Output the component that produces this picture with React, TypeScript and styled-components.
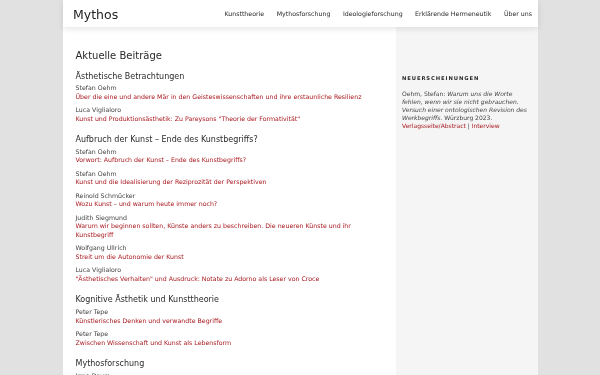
import React from "react";
import styled, { createGlobalStyle } from "styled-components";

const Global = createGlobalStyle`
  html, body { margin: 0; padding: 0; background: #e1e1e1; }
  body { font-family: "DejaVu Sans", Verdana, sans-serif; color: #333; -webkit-font-smoothing: antialiased; }
  * { box-sizing: border-box; }
`;

const Page = styled.div`
  width: 475px;
  margin: 0 auto;
  min-height: 375px;
  background: #fff;
  display: flex;
  flex-direction: column;
  will-change: transform;
`;

const Header = styled.header`
  position: relative;
  z-index: 2;
  height: 27px;
  display: flex;
  align-items: center;
  justify-content: space-between;
  padding: 0 6px 0 10px;
  background: #fff;
  box-shadow: 0 2px 6px rgba(0, 0, 0, 0.1);
`;

const Logo = styled.div`
  font-size: 12.5px;
  line-height: 14px;
  padding-top: 2px;
  color: #1e1e1e;
`;

const Nav = styled.nav`
  display: flex;
  align-items: center;
`;

const NavItem = styled.a`
  font-size: 6.25px;
  line-height: 8px;
  padding: 0 6.25px;
  color: #2a2a2a;
  text-decoration: none;
  &:last-child { padding-right: 0; }
`;

const Body = styled.div`
  display: grid;
  grid-template-columns: 333px 142px;
  flex: 1;
`;

const Main = styled.main`
  padding: 22.5px 12.5px 20px 12.5px;
`;

const Title = styled.h1`
  margin: 0 0 10px;
  font-size: 10px;
  line-height: 12px;
  font-weight: normal;
  color: #2a2a2a;
`;

const Section = styled.section`
  margin-bottom: 11.5px;
`;

const SectionTitle = styled.h2`
  margin: 0 0 3px;
  font-size: 8px;
  line-height: 9.6px;
  font-weight: normal;
  color: #2a2a2a;
`;

const Entries = styled.div`
  display: flex;
  flex-direction: column;
  gap: 4.5px;
`;

const Entry = styled.div`
  font-size: 6.25px;
  line-height: 8.75px;
`;

const Author = styled.div`
  color: #444;
`;

const Link = styled.a`
  display: block;
  color: #a8181e;
  text-decoration: none;
`;

const Sidebar = styled.aside`
  background: #f5f5f5;
  padding: 48px 6px 20px 6px;
`;

const SideTitle = styled.h3`
  margin: 0 0 8.3px;
  font-size: 5.25px;
  line-height: 6.3px;
  font-weight: bold;
  letter-spacing: 0.9px;
  color: #2a2a2a;
`;

const SideText = styled.p`
  margin: 0;
  font-size: 6px;
  line-height: 8.2px;
  color: #444;
  em { font-style: italic; }
`;

const SideLink = styled.a`
  color: #a8181e;
  text-decoration: none;
`;

const nav = ["Kunsttheorie", "Mythosforschung", "Ideologieforschung", "Erklärende Hermeneutik", "Über uns"];

const sections: { title: string; items: [string, string][] }[] = [
  {
    title: "Ästhetische Betrachtungen",
    items: [
      ["Stefan Oehm", "Über die eine und andere Mär in den Geisteswissenschaften und ihre erstaunliche Resilienz"],
      ["Luca Viglialoro", "Kunst und Produktionsästhetik: Zu Pareysons \"Theorie der Formativität\""],
    ],
  },
  {
    title: "Aufbruch der Kunst – Ende des Kunstbegriffs?",
    items: [
      ["Stefan Oehm", "Vorwort: Aufbruch der Kunst – Ende des Kunstbegriffs?"],
      ["Stefan Oehm", "Kunst und die Idealisierung der Reziprozität der Perspektiven"],
      ["Reinold Schmücker", "Wozu Kunst – und warum heute immer noch?"],
      ["Judith Siegmund", "Warum wir beginnen sollten, Künste anders zu beschreiben. Die neueren Künste und ihr Kunstbegriff"],
      ["Wolfgang Ullrich", "Streit um die Autonomie der Kunst"],
      ["Luca Viglialoro", "\"Ästhetisches Verhalten\" und Ausdruck: Notate zu Adorno als Leser von Croce"],
    ],
  },
  {
    title: "Kognitive Ästhetik und Kunsttheorie",
    items: [
      ["Peter Tepe", "Künstlerisches Denken und verwandte Begriffe"],
      ["Peter Tepe", "Zwischen Wissenschaft und Kunst als Lebensform"],
    ],
  },
  {
    title: "Mythosforschung",
    items: [
      ["Irma Daum", "Mythos und Erzählung"],
    ],
  },
];

export default function App() {
  return (
    <>
      <Global />
      <Page>
        <Header>
          <Logo>Mythos</Logo>
          <Nav>
            {nav.map((n) => (
              <NavItem key={n} href="#">{n}</NavItem>
            ))}
          </Nav>
        </Header>
        <Body>
          <Main>
            <Title>Aktuelle Beiträge</Title>
            {sections.map((s) => (
              <Section key={s.title}>
                <SectionTitle>{s.title}</SectionTitle>
                <Entries>
                  {s.items.map(([a, t], i) => (
                    <Entry key={i}>
                      <Author>{a}</Author>
                      <Link href="#">{t}</Link>
                    </Entry>
                  ))}
                </Entries>
              </Section>
            ))}
          </Main>
          <Sidebar>
            <SideTitle>NEUERSCHEINUNGEN</SideTitle>
            <SideText>
              Oehm, Stefan: <em>Warum uns die Worte fehlen, wenn wir sie nicht gebrauchen. Versuch einer ontologischen Revision des Werkbegriffs.</em> Würzburg 2023.{" "}
              <SideLink href="#">Verlagsseite/Abstract</SideLink> | <SideLink href="#">Interview</SideLink>
            </SideText>
          </Sidebar>
        </Body>
      </Page>
    </>
  );
}
